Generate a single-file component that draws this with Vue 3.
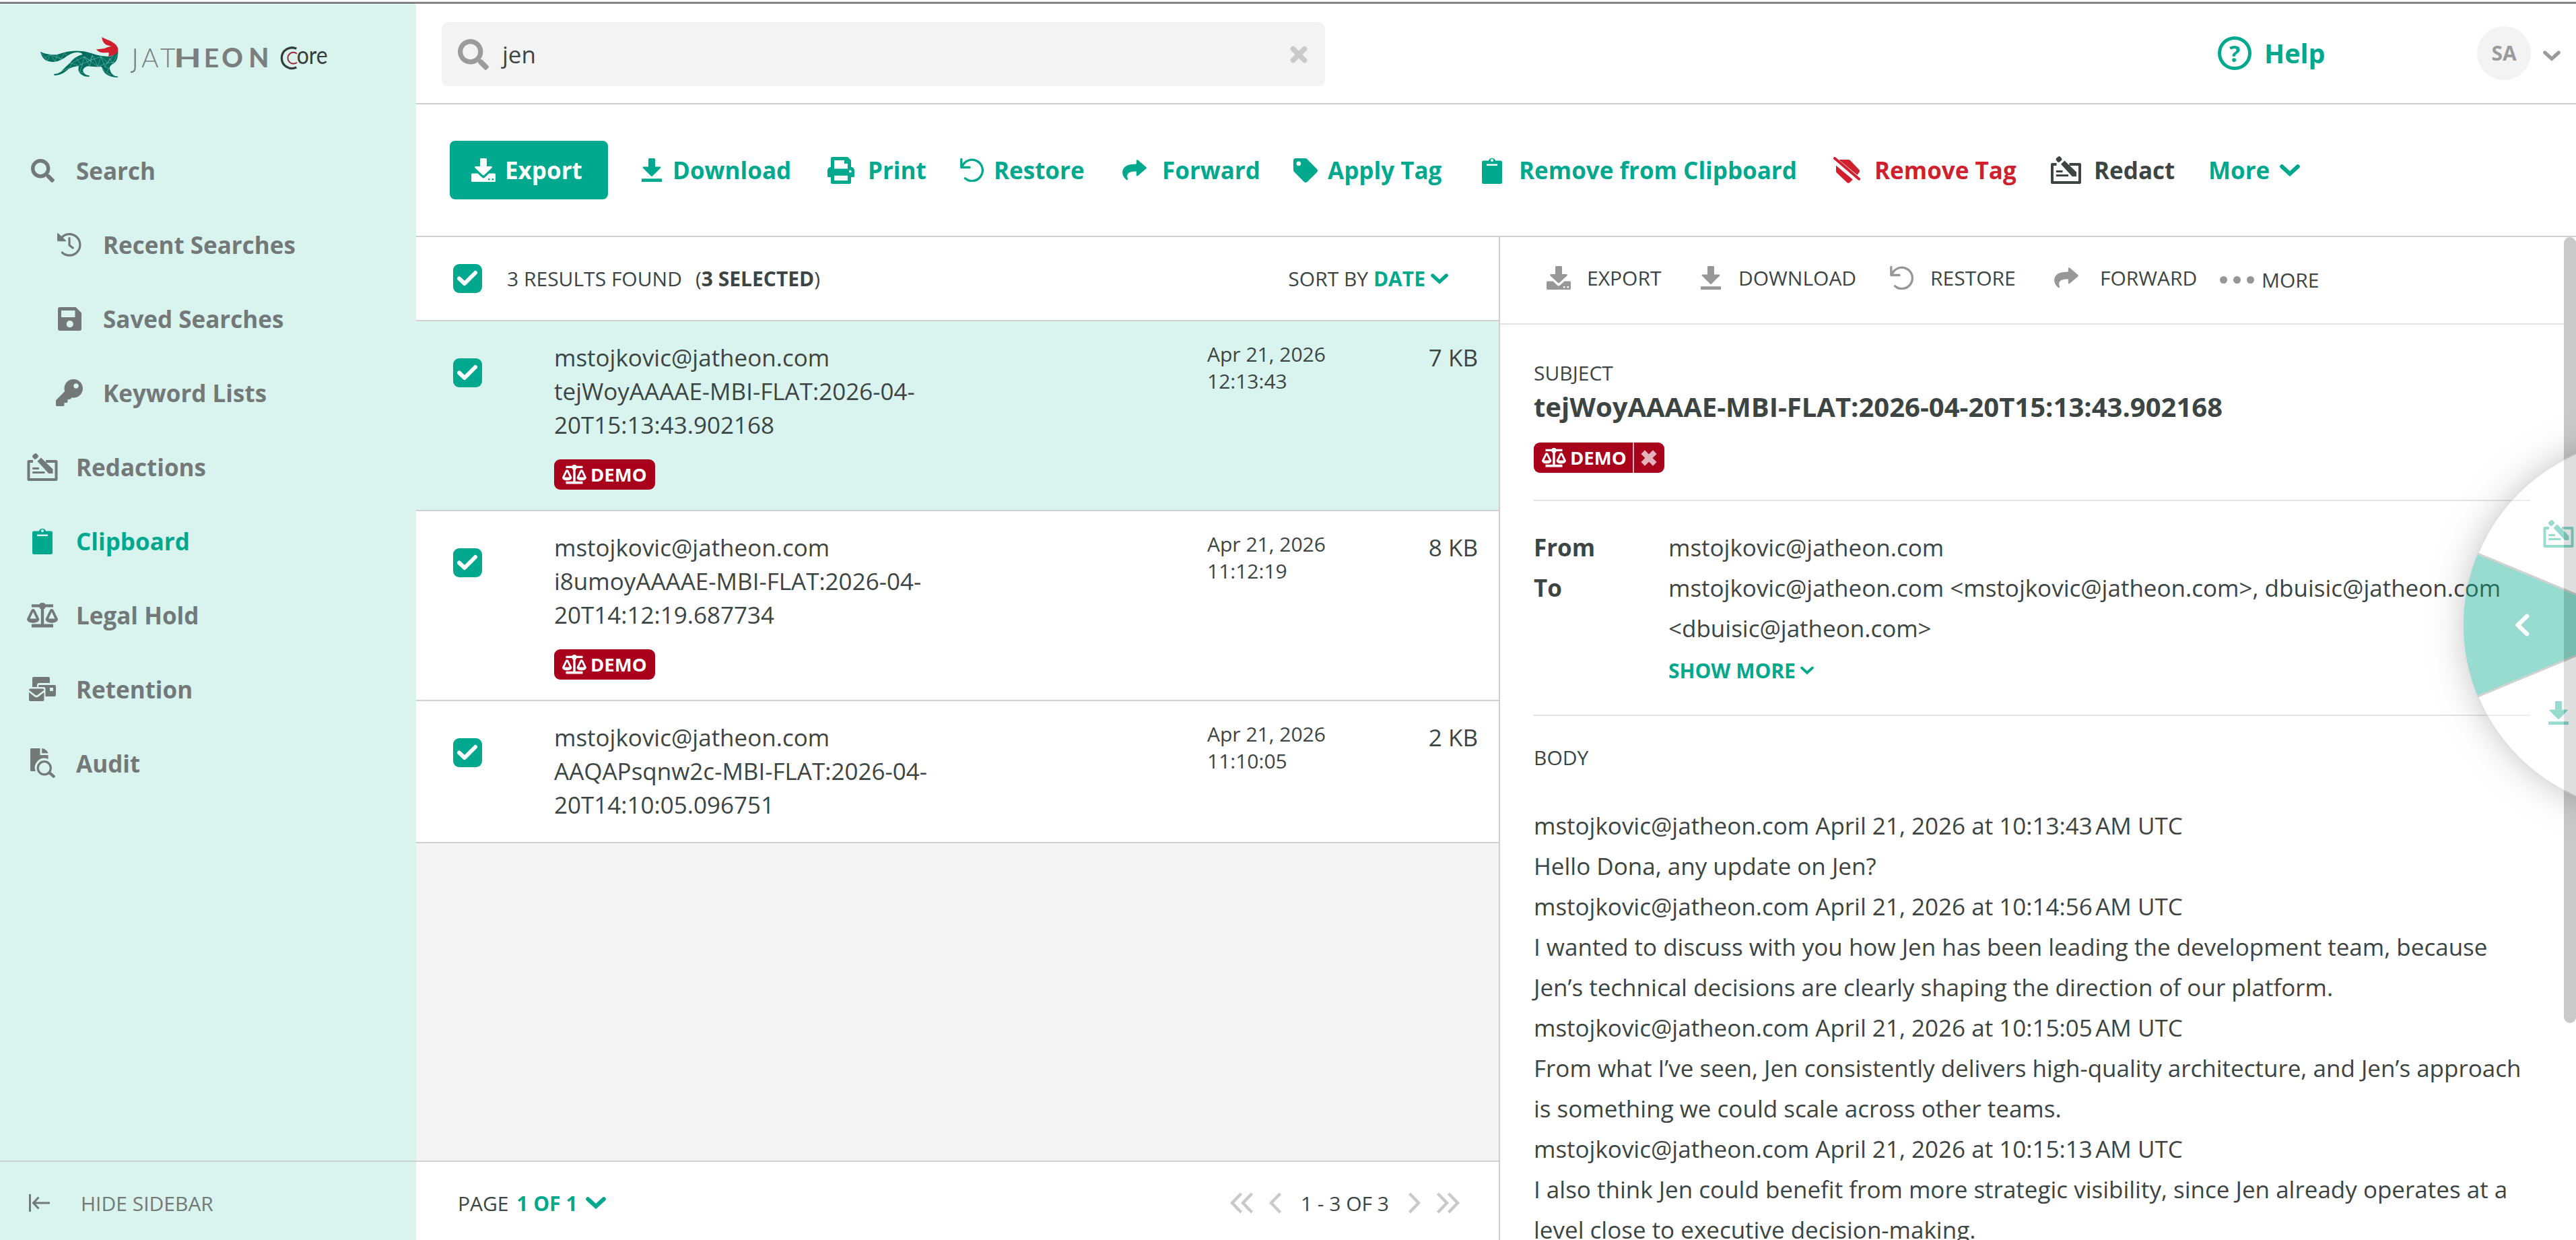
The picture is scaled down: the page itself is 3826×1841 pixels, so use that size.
<template>
  <!-- Shared icon shapes -->
  <svg class="sprite" width="0" height="0">
    <symbol id="i-search" viewBox="0 0 512 512">
      <path fill="currentColor" d="M505 442.7L405.3 343c-4.5-4.5-10.6-7-17-7H372c27.6-35.3 44-79.7 44-128C416 93.1 322.9 0 208 0S0 93.1 0 208s93.1 208 208 208c48.3 0 92.7-16.4 128-44v16.3c0 6.4 2.5 12.5 7 17l99.7 99.7c9.4 9.4 24.6 9.4 33.9 0l28.3-28.3c9.4-9.4 9.4-24.6.1-34zM208 336c-70.7 0-128-57.2-128-128 0-70.7 57.2-128 128-128 70.7 0 128 57.2 128 128 0 70.7-57.2 128-128 128z" />
    </symbol>
    <symbol id="i-history" viewBox="0 0 36 36">
      <path fill="currentColor" d="M0 2.4C0 1.2 1 1 1.8 1.8L13 12v1.2H1.2A1.2 1.2 0 0 1 0 12z" />
      <path fill="none" stroke="currentColor" stroke-width="3.2" stroke-linecap="round" stroke-linejoin="round" d="M6.5 7.6A15.8 15.8 0 1 1 7.4 30M18 8.5V19l5.2 4" />
    </symbol>
    <symbol id="i-save" viewBox="0 0 35 35">
      <path fill="currentColor" fill-rule="evenodd" d="M3 0H26.5L35 8.5V32a3 3 0 0 1-3 3H3a3 3 0 0 1-3-3V3a3 3 0 0 1 3-3zM5 5V15H25.5V5zM17.8 20a5.1 5.1 0 1 0 0 10.2a5.1 5.1 0 1 0 0-10.2z" />
    </symbol>
    <symbol id="i-key" viewBox="0 0 512 512">
      <path fill="currentColor" d="M512 176.001C512 273.203 433.202 352 336 352c-11.22 0-22.19-1.062-32.827-3.069l-24.012 27.014A23.999 23.999 0 0 1 261.223 384H224v40c0 13.255-10.745 24-24 24h-40v40c0 13.255-10.745 24-24 24H24c-13.255 0-24-10.745-24-24v-78.059c0-6.365 2.529-12.47 7.029-16.971l161.802-161.802C163.108 213.814 160 195.271 160 176 160 78.798 238.797.001 335.999 0 433.488-.001 512 78.511 512 176.001zM336 128c0 26.51 21.49 48 48 48s48-21.49 48-48-21.49-48-48-48-48 21.49-48 48z" />
    </symbol>
    <symbol id="i-redact" viewBox="0 0 45 41">
      <path fill="none" stroke="currentColor" stroke-width="4" stroke-linejoin="round" d="M8.5 12H2V39H43V12H27.5" />
      <path fill="none" stroke="currentColor" stroke-width="3.2" d="M7.8 22.5H17.5M7.8 28.5H26" />
      <path fill="currentColor" d="M15 11.8L20.4 6.4L38 23.5V30H31.8Z" />
      <rect x="8" y=".8" width="8" height="7.4" rx="2.6" fill="currentColor" transform="rotate(-40 12 4.5)" />
    </symbol>
    <symbol id="i-clipboard" viewBox="0 0 30 40">
      <path fill="currentColor" fill-rule="evenodd" d="M2.5 5.5H10a5.2 5.2 0 0 1 10 0h7.5A2.5 2.5 0 0 1 30 8v29.5a2.5 2.5 0 0 1-2.5 2.5h-25A2.5 2.5 0 0 1 0 37.5V8a2.5 2.5 0 0 1 2.5-2.5zM15 3a2.1 2.1 0 1 0 0 4.2a2.1 2.1 0 1 0 0-4.2zM7 10.5h16v2.4H7z" />
    </symbol>
    <symbol id="i-scales" viewBox="0 0 46 37">
      <path fill="currentColor" d="M7 2.2H18.5A5.3 5.3 0 0 1 27.5 2.2H39V6.4H27.6A5.5 5.5 0 0 1 25.2 9.6V31.6H39V36.4H7V31.6H20.8V9.6A5.5 5.5 0 0 1 18.4 6.4H7z" />
      <path fill="currentColor" fill-rule="evenodd" d="M6.6 10.6a3 3 0 0 1 5.2 0L18.2 23.5c1 3.4-3.6 6.2-9 6.2S-.8 26.9.2 23.5zM9.2 13.5L4.5 23.5H13.9zM34.2 10.6a3 3 0 0 1 5.2 0L45.8 23.5c1 3.4-3.6 6.2-9 6.2S26.8 26.9 27.8 23.5zM36.8 13.5L32.1 23.5H41.5z" />
    </symbol>
    <symbol id="i-mailbulk" viewBox="0 0 40 36">
      <path fill="currentColor" fill-rule="evenodd" d="M5 2a2 2 0 0 1 2-2H29a2 2 0 0 1 2 2V9H15.5a3.5 3.5 0 0 0-3.5 3.5V15H5zM14 15V13.8a1.8 1.8 0 0 1 1.8-1.8H38a2 2 0 0 1 2 2V27a2 2 0 0 1-2 2H24.5V18a3 3 0 0 0-3-3zM31 16v5h5v-5zM2 17.5H20.5a2 2 0 0 1 2 2L13 26.8a2.8 2.8 0 0 1-3.6 0L0 19.5a2 2 0 0 1 2-2zM0 22.8L8.6 29.4a4.5 4.5 0 0 0 5.3 0L22.5 22.8V34a2 2 0 0 1-2 2H2a2 2 0 0 1-2-2z" />
    </symbol>
    <symbol id="i-audit" viewBox="0 0 37 44">
      <path fill="currentColor" d="M1.5 0H14.5V10H26.5V16A14 14 0 0 0 7.8 34H1.5A1.5 1.5 0 0 1 0 32.5V1.5A1.5 1.5 0 0 1 1.5 0zM17.2 0C21 0 26 4 26.5 7.2H17.2z" />
      <circle cx="20.8" cy="29.3" r="9.6" fill="none" stroke="currentColor" stroke-width="3.2" />
      <path fill="none" stroke="currentColor" stroke-width="4.2" d="M27.5 36L30.5 38L36 43" />
    </symbol>
    <symbol id="i-hide" viewBox="0 0 31 26">
      <path fill="none" stroke="currentColor" stroke-width="3" d="M1.5 0V26M6 13H31M14.5 4.5L6.5 13L14.5 21.5" />
    </symbol>
    <symbol id="i-export" viewBox="0 0 36 35">
      <path fill="currentColor" fill-rule="evenodd" d="M14.5 0h7A1.5 1.5 0 0 1 23 1.5V12h6.5c1.3 0 1.8 1.3 1 2.2L19 25c-.6.6-1.4.6-2 0L5.500 14.2c-.8-.9-.3-2.2 1-2.2H13V1.5A1.5 1.5 0 0 1 14.5 0zM1.500 22.5H9.5L16 28.6a3 3 0 0 0 4 0L26.500 22.5H34.5A1.5 1.5 0 0 1 36 24V33.5A1.5 1.5 0 0 1 34.5 35H1.5A1.5 1.5 0 0 1 0 33.5V24A1.5 1.5 0 0 1 1.5 22.5zM25 30V32.5H27.5V30zM30.5 30V32.5H33V30z" />
    </symbol>
    <symbol id="i-download" viewBox="0 0 30 35">
      <path fill="currentColor" d="M11.5 0h7A1.5 1.5 0 0 1 20 1.5V12.5h7c1.3 0 1.8 1.2 1 2L16 26.6c-.6.6-1.4.6-2 0L2 14.5c-.8-.8-.3-2 1-2h7V1.5A1.5 1.5 0 0 1 11.5 0zM0 30.3h30V35H0z" />
    </symbol>
    <symbol id="i-print" viewBox="0 0 40 40">
      <path fill="currentColor" fill-rule="evenodd" d="M7.5 0H30L35 5V15A5 5 0 0 1 40 20V28.5A1.5 1.5 0 0 1 38.5 30H35V37.5A2.5 2.5 0 0 1 32.5 40H7.5A2.5 2.5 0 0 1 5 37.5V30H1.5A1.5 1.5 0 0 1 0 28.5V20A5 5 0 0 1 5 15V2.5A2.5 2.5 0 0 1 7.5 0zM10 5V17.5H30V10H25V5zM10 27.8V35H30V27.8zM33.8 19.5a1.9 1.9 0 1 0 0 3.8a1.9 1.9 0 1 0 0-3.8z" />
    </symbol>
    <symbol id="i-restore" viewBox="0 0 35 35">
      <path fill="none" stroke="currentColor" stroke-width="3.3" stroke-linecap="round" stroke-linejoin="round" d="M1.8 1.500V13.500H14M3 12.300A15.700 15.700 0 1 1 7.400 29.800" />
    </symbol>
    <symbol id="i-forward" viewBox="0 0 36 31">
      <path fill="currentColor" d="M20.8 1.6Q21.2 -.6 23 .6L35.2 11Q36.4 12.2 35.2 13.4L23 24Q21.2 25.2 20.8 23V17.6C11 17.800 5 19.500 8 28.800Q8 31 6 30C-.5 24.500-1 18 1.500 13.800C4.500 8 12 6.800 20.800 6.600z" />
    </symbol>
    <symbol id="i-tag" viewBox="0 0 512 512">
      <path fill="currentColor" d="M0 252.118V48C0 21.49 21.49 0 48 0h204.118a48 48 0 0 1 33.941 14.059l211.882 211.882c18.745 18.745 18.745 49.137 0 67.882L293.823 497.941c-18.745 18.745-49.137 18.745-67.882 0L14.059 286.059A48 48 0 0 1 0 252.118zM112 64c-26.51 0-48 21.49-48 48s21.49 48 48 48 48-21.49 48-48-21.49-48-48-48z" />
    </symbol>
    <symbol id="i-untag" viewBox="0 0 40 39">
      <path fill="currentColor" d="M8 4H22Q24 4 25.2 5.2L38.3 19Q40 21 38.3 23L35.500 26.800ZM4 12.800L28.800 33.500L24 38.200Q22 39.600 20.300 38L5 23.500Q4 22.500 4 21Z" />
      <path stroke="currentColor" stroke-width="4" stroke-linecap="round" d="M2 2L38 32.700" />
    </symbol>
    <symbol id="i-down" viewBox="0 0 30 18">
      <path fill="none" stroke="currentColor" stroke-width="6" stroke-linecap="round" d="M3.200 3.200L15 14L26.800 3.200" />
    </symbol>
    <symbol id="i-close" viewBox="0 0 26 26">
      <path stroke="currentColor" stroke-width="7.500" stroke-linecap="round" d="M4.500 4.500L21.500 21.500M21.500 4.500L4.500 21.500" />
    </symbol>
    <symbol id="i-times" viewBox="0 0 24 24">
      <path stroke="currentColor" stroke-width="8" stroke-linecap="square" d="M6 6L18 18M18 6L6 18" />
    </symbol>
    <symbol id="i-check" viewBox="0 0 43 43">
      <path fill="none" stroke="currentColor" stroke-width="6" stroke-linecap="round" stroke-linejoin="round" d="M9 21.500L17 29L33 13" />
    </symbol>
    <symbol id="i-prev" viewBox="0 0 20 32">
      <path fill="none" stroke="currentColor" stroke-width="4.500" d="M17.500 2L4 16L17.500 30" />
    </symbol>
    <symbol id="i-next" viewBox="0 0 20 32">
      <path fill="none" stroke="currentColor" stroke-width="4.500" d="M2.500 2L16 16L2.500 30" />
    </symbol>
  </svg>

  <div class="archive">
    <div class="window-edge"></div>

    <div class="shell">
      <aside class="sidebar">
        <svg class="logo" viewBox="0 0 1350 270">
          <path fill="#006f60" d="M30 110C50 122 75 122 100 124C130 118 150 105 200 107C250 108 265 125 310 130L335 132C355 128 370 118 376 104C377 130 372 150 360 160C345 170 340 172 338 185C345 210 355 218 376 221L374 225C345 224 320 215 310 195C305 187 308 182 300 176C280 180 255 176 240 175C225 180 215 190 222 202C228 212 238 216 249 217L247 222C225 222 205 212 200 195C198 185 202 178 200 174C180 176 165 180 150 192C135 205 118 216 92 216L90 210C105 209 115 206 125 196C135 185 150 172 162 160C172 148 185 132 215 124C222 120 210 112 190 113C165 115 150 130 130 142C110 155 90 158 70 154C50 150 36 135 30 110Z" />
          <path fill="none" stroke="#8fc9bd" stroke-width="1.600" d="M36 118L62 150L74 122L96 154L104 124L122 144L136 118L150 126M50 138L74 122L122 144M190 140L215 172L225 132L250 174L262 126L286 176L300 132L318 178L340 140L352 162L374 122M175 158L225 132L250 150L300 132L330 160L352 130M162 160L200 172L250 150L286 176L330 160L360 158M215 172L205 200L222 206M318 178L335 184L325 205L345 214M300 176L318 200M120 200L160 182L172 158M262 126L250 150L225 132" />
          <path fill="#d0202e" d="M304 45C325 58 350 62 365 78C378 92 378 105 374 112C365 125 350 128 332 132C335 125 337 118 333 113C315 117 290 116 279 100C295 98 312 98 325 92C330 88 340 88 345 86L330 82C312 76 305 62 304 45Z" />
          <g class="logo-name">
            <path class="logo-stem" d="M452 97V180Q452 202 432 201" />
            <text class="thin" x="480 564" y="180">AT</text>
            <text class="mid" x="625" y="180" textLength="122" lengthAdjust="spacingAndGlyphs">H</text>
            <text class="mid" x="758" y="180">E</text>
            <text class="heavy" x="838 958" y="180">ON</text>
          </g>
          <path class="core-outer" d="M1171 97A46 46 0 1 0 1171 180" />
          <path class="core-inner" d="M1173 119A25 25 0 1 0 1173 158" />
          <text class="core-name" x="1172" y="164" textLength="138" lengthAdjust="spacingAndGlyphs">ore</text>
        </svg>

        <nav class="nav">
          <a
            v-for="item in navItems"
            :key="item.label"
            class="nav-item"
            :class="{ sub: item.sub, active: item.active }"
          >
            <span class="nav-icon">
              <svg :style="{ width: item.w + 'px', height: item.h + 'px' }"><use :href="'#i-' + item.icon" /></svg>
            </span>
            {{ item.label }}
          </a>
        </nav>

        <div class="hide-sidebar">
          <svg class="hide-icon"><use href="#i-hide" /></svg>
          HIDE SIDEBAR
        </div>
      </aside>

      <main class="main">
        <header class="header">
          <div class="search-box">
            <svg class="search-icon"><use href="#i-search" /></svg>
            <span class="search-text">{{ query }}</span>
            <svg class="clear-icon"><use href="#i-close" /></svg>
          </div>
          <div class="help">
            <span class="help-mark">?</span>
            Help
          </div>
          <div class="account">
            <span class="avatar">SA</span>
            <svg class="account-arrow"><use href="#i-down" /></svg>
          </div>
        </header>

        <div class="toolbar">
          <button class="btn-export">
            <svg class="export-icon"><use href="#i-export" /></svg>
            Export
          </button>
          <div
            v-for="action in actions"
            :key="action.label"
            class="action"
            :class="action.tone"
            :style="{ width: action.width + 'px' }"
          >
            <span class="action-icon" :style="{ width: action.slot + 'px' }">
              <svg :style="{ width: action.w + 'px', height: action.h + 'px' }"><use :href="'#i-' + action.icon" /></svg>
            </span>
            {{ action.label }}
          </div>
          <div class="action more">
            More
            <svg class="more-arrow"><use href="#i-down" /></svg>
          </div>
        </div>

        <div class="content">
          <section class="results">
            <div class="results-header">
              <span class="checkbox"><svg><use href="#i-check" /></svg></span>
              <span class="found">3 RESULTS FOUND</span>
              <span class="selected">(<b>3 SELECTED</b>)</span>
              <span class="sort">SORT BY <b>DATE</b></span>
              <svg class="sort-arrow"><use href="#i-down" /></svg>
            </div>

            <div
              v-for="mail in mails"
              :key="mail.time"
              class="row"
              :class="{ current: mail.current }"
            >
              <span class="checkbox"><svg><use href="#i-check" /></svg></span>
              <div class="row-text">
                <div>{{ mail.from }}</div>
                <div v-for="line in mail.subject" :key="line">{{ line }}</div>
                <span v-if="mail.tag" class="tag">
                  <svg class="tag-icon"><use href="#i-scales" /></svg>{{ mail.tag }}
                </span>
              </div>
              <div class="row-date">{{ mail.date }}<br>{{ mail.time }}</div>
              <div class="row-size">{{ mail.size }}</div>
            </div>

            <div class="results-empty"></div>

            <div class="pager">
              <span>PAGE <b>1 OF 1</b></span>
              <svg class="page-arrow"><use href="#i-down" /></svg>
              <div class="pager-nav">
                <span class="double"><svg><use href="#i-prev" /></svg><svg><use href="#i-prev" /></svg></span>
                <svg class="single"><use href="#i-prev" /></svg>
                <span class="range">1 - 3 OF 3</span>
                <svg class="single"><use href="#i-next" /></svg>
                <span class="double"><svg><use href="#i-next" /></svg><svg><use href="#i-next" /></svg></span>
              </div>
            </div>
          </section>

          <section class="preview">
            <div class="preview-toolbar">
              <div
                v-for="action in previewActions"
                :key="action.label"
                class="preview-action"
                :style="{ width: action.width + 'px' }"
              >
                <span class="action-icon" :style="{ width: action.slot + 'px' }">
                  <svg :style="{ width: action.w + 'px', height: action.h + 'px' }"><use :href="'#i-' + action.icon" /></svg>
                </span>
                {{ action.label }}
              </div>
              <div class="preview-more">
                <i></i><i></i><i></i>
                <span>MORE</span>
              </div>
            </div>

            <div class="message">
              <div class="section-label">SUBJECT</div>
              <h1 class="subject">tejWoyAAAAE-MBI-FLAT:2026-04-20T15:13:43.902168</h1>
              <span class="tag removable">
                <svg class="tag-icon"><use href="#i-scales" /></svg>DEMO
                <span class="tag-remove"><svg><use href="#i-times" /></svg></span>
              </span>

              <div class="people">
                <div class="person">
                  <b>From</b>
                  <span>mstojkovic@jatheon.com</span>
                </div>
                <div class="person">
                  <b>To</b>
                  <span>mstojkovic@jatheon.com &lt;mstojkovic@jatheon.com&gt;, dbuisic@jatheon.com &lt;dbuisic@jatheon.com&gt;</span>
                </div>
                <div class="show-more">
                  SHOW MORE
                  <svg><use href="#i-down" /></svg>
                </div>
              </div>

              <div class="section-label body-label">BODY</div>
              <div class="body-text">
                <div v-for="(line, i) in bodyLines" :key="i">{{ line }}</div>
              </div>
            </div>
          </section>
        </div>
      </main>
    </div>

    <div class="scroll-thumb"></div>

    <!-- Quick action wheel, half off the right edge -->
    <div class="wheel">
      <div class="wheel-disc"></div>
      <svg class="wheel-slices" viewBox="0 0 560 560">
        <circle cx="280" cy="280" r="277" fill="#fff" stroke="#b4b4b4" stroke-width="2" />
        <path fill="#00a88e" d="M280 280L24.1 174A277 277 0 0 0 24.1 386Z" />
        <path fill="none" stroke="#8d9391" stroke-width="3" d="M24.1 174L280 280L24.1 386" />
        <path fill="none" stroke="#fff" stroke-width="6.5" stroke-linecap="round" stroke-linejoin="round" d="M97 267L83.5 280L97 293" />
      </svg>
      <svg class="wheel-redact"><use href="#i-redact" /></svg>
      <svg class="wheel-download"><use href="#i-download" /></svg>
    </div>
  </div>
</template>

<script setup>
import { ref } from 'vue'

const query = ref('jen')

const navItems = [
  { label: 'Search', icon: 'search', w: 35, h: 35 },
  { label: 'Recent Searches', icon: 'history', w: 36, h: 36, sub: true },
  { label: 'Saved Searches', icon: 'save', w: 35, h: 35, sub: true },
  { label: 'Keyword Lists', icon: 'key', w: 40, h: 40, sub: true },
  { label: 'Redactions', icon: 'redact', w: 46, h: 41 },
  { label: 'Clipboard', icon: 'clipboard', w: 30, h: 40, active: true },
  { label: 'Legal Hold', icon: 'scales', w: 46, h: 37 },
  { label: 'Retention', icon: 'mailbulk', w: 40, h: 36 },
  { label: 'Audit', icon: 'audit', w: 37, h: 44 }
]

// slot is the icon column, width is the whole button
const actions = [
  { label: 'Download', icon: 'download', w: 30, h: 35, slot: 46, width: 276 },
  { label: 'Print', icon: 'print', w: 40, h: 40, slot: 60, width: 197 },
  { label: 'Restore', icon: 'restore', w: 35, h: 35, slot: 50, width: 241 },
  { label: 'Forward', icon: 'forward', w: 36, h: 31, slot: 59, width: 254 },
  { label: 'Apply Tag', icon: 'tag', w: 36, h: 36, slot: 51, width: 280 },
  { label: 'Remove from Clipboard', icon: 'clipboard', w: 30, h: 40, slot: 55, width: 522 },
  { label: 'Remove Tag', icon: 'untag', w: 40, h: 39, slot: 61, width: 323, tone: 'danger' },
  { label: 'Redact', icon: 'redact', w: 45, h: 41, slot: 64, width: 234, tone: 'dark' }
]

const previewActions = [
  { label: 'EXPORT', icon: 'export', w: 36, h: 35, slot: 60, width: 229 },
  { label: 'DOWNLOAD', icon: 'download', w: 30, h: 35, slot: 56, width: 281 },
  { label: 'RESTORE', icon: 'restore', w: 35, h: 35, slot: 60, width: 244 },
  { label: 'FORWARD', icon: 'forward', w: 36, h: 31, slot: 68, width: 246 }
]

const mails = ref([
  {
    from: 'mstojkovic@jatheon.com',
    subject: ['tejWoyAAAAE-MBI-FLAT:2026-04-', '20T15:13:43.902168'],
    tag: 'DEMO',
    date: 'Apr 21, 2026',
    time: '12:13:43',
    size: '7 KB',
    current: true
  },
  {
    from: 'mstojkovic@jatheon.com',
    subject: ['i8umoyAAAAE-MBI-FLAT:2026-04-', '20T14:12:19.687734'],
    tag: 'DEMO',
    date: 'Apr 21, 2026',
    time: '11:12:19',
    size: '8 KB'
  },
  {
    from: 'mstojkovic@jatheon.com',
    subject: ['AAQAPsqnw2c-MBI-FLAT:2026-04-', '20T14:10:05.096751'],
    date: 'Apr 21, 2026',
    time: '11:10:05',
    size: '2 KB'
  }
])

const bodyLines = [
  'mstojkovic@jatheon.com April 21, 2026 at 10:13:43\u202fAM UTC',
  'Hello Dona, any update on Jen?',
  'mstojkovic@jatheon.com April 21, 2026 at 10:14:56\u202fAM UTC',
  'I wanted to discuss with you how Jen has been leading the development team, because Jen’s technical decisions are clearly shaping the direction of our platform.',
  'mstojkovic@jatheon.com April 21, 2026 at 10:15:05\u202fAM UTC',
  'From what I’ve seen, Jen consistently delivers high-quality architecture, and Jen’s approach is something we could scale across other teams.',
  'mstojkovic@jatheon.com April 21, 2026 at 10:15:13\u202fAM UTC',
  'I also think Jen could benefit from more strategic visibility, since Jen already operates at a level close to executive decision-making.'
]
</script>

<style>
body {
  margin: 0;
  overflow: hidden;
}
</style>

<style scoped>
.sprite {
  position: absolute;
}

.archive {
  position: relative;
  display: flex;
  flex-direction: column;
  width: 3826px;
  height: 1841px;
  overflow: hidden;
  background: #fff;
  color: #3c4543;
  font-family: "Open Sans", sans-serif;
  font-size: 35px;
}

.archive svg {
  display: block;
  flex-shrink: 0;
}

.window-edge {
  flex: 0 0 2px;
  border-top: 2px solid #fff;
  border-bottom: 1px solid #000;
  background: #c8c8c8;
}

.shell {
  display: flex;
  flex: 1;
  min-height: 0;
}

/* Sidebar */
.sidebar {
  display: flex;
  flex-direction: column;
  width: 618px;
  flex-shrink: 0;
  background: #d9f3ee;
  color: #737978;
}

.logo {
  width: 450px;
  height: 90px;
  margin: 35px 0 0 50px;
}

.logo-name {
  fill: #7a7f7e;
  font-family: Lato, sans-serif;
  font-size: 117px;
}

.logo-stem {
  fill: none;
  stroke: #7a7f7e;
  stroke-width: 7px;
}

.thin {
  font-weight: 300;
}

.mid {
  font-weight: 700;
}

.heavy {
  font-weight: 900;
}

.core-outer {
  fill: none;
  stroke: #363e3c;
  stroke-width: 10px;
}

.core-inner {
  fill: none;
  stroke: #a3263a;
  stroke-width: 6px;
}

.core-name {
  fill: #363e3c;
  font-family: Lato, sans-serif;
  font-size: 108px;
}

.nav {
  flex: 1;
  padding-top: 68px;
}

.nav-item {
  display: flex;
  align-items: center;
  height: 110px;
  padding-left: 38px;
  font-weight: 700;
}

.nav-item.sub {
  padding-left: 78px;
}

.nav-item.active {
  color: #00a88e;
}

.nav-icon {
  display: flex;
  justify-content: center;
  width: 50px;
  margin-right: 25px;
}

.hide-sidebar {
  display: flex;
  align-items: center;
  height: 118px;
  padding: 6px 0 0 43px;
  box-sizing: border-box;
  border-top: 2px solid #c8d0ce;
  font-size: 30px;
}

.hide-icon {
  width: 31px;
  height: 26px;
  margin-right: 46px;
}

/* Header */
.main {
  display: flex;
  flex-direction: column;
  flex: 1;
  min-width: 0;
}

.header {
  display: flex;
  align-items: center;
  height: 148px;
  flex-shrink: 0;
  padding-left: 38px;
  border-bottom: 2px solid #cfcfcf;
}

.search-box {
  display: flex;
  align-items: center;
  width: 1312px;
  height: 95px;
  margin-top: 3px;
  padding: 0 26px 0 24px;
  box-sizing: border-box;
  border-radius: 10px;
  background: #f3f3f3;
}

.search-icon {
  width: 46px;
  height: 46px;
  color: #9b9b9b;
}

.search-text {
  flex: 1;
  margin-left: 20px;
}

.clear-icon {
  width: 26px;
  height: 26px;
  color: #cacaca;
}

.help {
  display: flex;
  align-items: center;
  margin-left: 1326px;
  width: 385px;
  color: #00a88e;
  font-size: 39.5px;
  font-weight: 700;
}

.help-mark {
  display: flex;
  align-items: center;
  justify-content: center;
  width: 50px;
  height: 50px;
  margin-right: 19px;
  border: 5px solid #00a88e;
  border-radius: 50%;
  box-sizing: border-box;
  font-size: 34px;
  line-height: 1;
}

.account {
  display: flex;
  align-items: center;
  gap: 18px;
}

.avatar {
  width: 80px;
  height: 80px;
  border-radius: 50%;
  background: #f3f3f3;
  color: #9b9b9b;
  font-size: 30px;
  font-weight: 700;
  line-height: 80px;
  text-align: center;
}

.account-arrow {
  width: 26px;
  height: 16px;
  margin-top: 8px;
  color: #9b9b9b;
}

/* Toolbar */
.toolbar {
  display: flex;
  align-items: center;
  height: 195px;
  flex-shrink: 0;
  padding-left: 50px;
  border-bottom: 2px solid #cfcfcf;
  font-weight: 700;
}

.btn-export {
  display: flex;
  align-items: center;
  width: 235px;
  height: 87px;
  margin-right: 50px;
  padding: 0 0 0 32px;
  border: none;
  border-radius: 8px;
  background: #00a88e;
  color: #fff;
  font: inherit;
}

.export-icon {
  width: 36px;
  height: 35px;
  margin-right: 14px;
}

.action {
  display: flex;
  align-items: center;
  color: #00a88e;
  white-space: nowrap;
}

.action.danger {
  color: #d0202e;
}

.action.dark {
  color: #3c4543;
}

.action-icon {
  flex-shrink: 0;
}

.more-arrow {
  width: 30px;
  height: 18px;
  margin-left: 15px;
}

/* Results list */
.content {
  display: flex;
  flex: 1;
  min-height: 0;
}

.results {
  display: flex;
  flex-direction: column;
  width: 1608px;
  flex-shrink: 0;
  border-right: 2px solid #cfcfcf;
}

.results-header {
  display: flex;
  align-items: center;
  height: 123px;
  padding: 0 75px 0 55px;
  border-bottom: 2px solid #cfcfcf;
  font-size: 30px;
}

.checkbox {
  flex-shrink: 0;
  width: 43px;
  height: 43px;
  border-radius: 9px;
  background: #00a88e;
  color: #fff;
}

.checkbox svg {
  width: 43px;
  height: 43px;
}

.found {
  margin-left: 37px;
}

.selected {
  margin-left: 20px;
}

.sort {
  margin-left: auto;
}

.sort b,
.pager b {
  color: #00a88e;
}

.sort-arrow {
  width: 26px;
  height: 16px;
  margin-left: 8px;
}

.sort-arrow,
.page-arrow {
  color: #00a88e;
}

.row {
  display: flex;
  padding: 29px 31px 30px 55px;
  border-bottom: 2px solid #cfcfcf;
  line-height: 50px;
}

.row.current {
  background: #d9f3ee;
}

.row .checkbox {
  margin-top: 26px;
}

.row-text {
  width: 970px;
  margin-left: 107px;
}

.row-date {
  font-size: 30px;
  line-height: 40px;
}

.row-size {
  margin-left: auto;
}

.tag {
  display: flex;
  align-items: center;
  width: 150px;
  height: 45px;
  margin-top: 26px;
  padding-left: 12px;
  box-sizing: border-box;
  border-radius: 9px;
  background: #a9001c;
  color: #fff;
  font-size: 27.5px;
  font-weight: 700;
  line-height: 45px;
}

.tag-icon {
  width: 36px;
  height: 29px;
  margin-right: 6px;
}

.results-empty {
  flex: 1;
  background: #f3f3f3;
}

.pager {
  display: flex;
  align-items: center;
  height: 118px;
  flex-shrink: 0;
  padding: 6px 57px 0 62px;
  box-sizing: border-box;
  border-top: 2px solid #cfcfcf;
  font-size: 30px;
}

.pager b {
  margin-left: 4px;
}

.page-arrow {
  width: 30px;
  height: 18px;
  margin-left: 12px;
}

.pager-nav {
  display: flex;
  align-items: center;
  margin-left: auto;
}

.pager-nav svg {
  width: 20px;
  height: 32px;
  color: #cacaca;
}

.double {
  display: flex;
}

.double svg + svg {
  margin-left: -4px;
}

.pager-nav .single {
  margin: 0 22px;
}

.range {
  margin: 0 6px;
}

/* Message preview */
.preview {
  flex: 1;
  min-width: 0;
  overflow: hidden;
}

.preview-toolbar {
  display: flex;
  align-items: center;
  height: 128px;
  padding-left: 69px;
  border-bottom: 2px solid #e3e3e3;
  font-size: 30px;
}

.preview-action {
  display: flex;
  align-items: center;
  padding-bottom: 7px;
}

.preview-action svg {
  color: #979797;
}

.preview-more {
  display: flex;
  align-items: center;
  padding-bottom: 1px;
}

.preview-more i {
  width: 11px;
  height: 11px;
  margin-right: 9px;
  border-radius: 50%;
  background: #979797;
}

.preview-more span {
  margin-left: 2px;
}

.message {
  width: 1480px;
  padding: 52px 0 0 50px;
}

.section-label {
  font-size: 30px;
  line-height: 40px;
}

.subject {
  margin: 5px 0 0;
  font-size: 40px;
  font-weight: 700;
  line-height: 50px;
}

.tag.removable {
  width: 194px;
  margin-top: 28px;
}

.tag-remove {
  display: flex;
  align-items: center;
  height: 45px;
  margin-left: 9px;
  padding-left: 10px;
  border-left: 2px solid #e5b3bb;
  color: #e5b3bb;
}

.tag-remove svg {
  width: 24px;
  height: 24px;
}

.people {
  margin-top: 40px;
  padding: 39px 0 33px;
  border-top: 2px solid #e3e3e3;
  border-bottom: 2px solid #e3e3e3;
  line-height: 60px;
}

.person {
  display: flex;
}

.person b {
  width: 200px;
  flex-shrink: 0;
}

.show-more {
  display: flex;
  align-items: center;
  height: 65px;
  margin-left: 200px;
  color: #00a88e;
  font-size: 30px;
  font-weight: 700;
}

.show-more svg {
  width: 20px;
  height: 13px;
  margin-left: 7px;
}

.body-label {
  margin-top: 42px;
}

.body-text {
  margin-top: 51px;
  line-height: 60px;
}

/* Overlays */
.scroll-thumb {
  position: absolute;
  top: 352px;
  right: 0;
  width: 18px;
  height: 1167px;
  border-radius: 9px;
  background: #c9c9c9;
}

.wheel {
  position: absolute;
  top: 648px;
  left: 3656px;
  width: 560px;
  height: 560px;
  opacity: 0.4;
  color: #00a88e;
}

.wheel-disc {
  position: absolute;
  inset: 4px;
  border-radius: 50%;
  box-shadow: 0 0 50px rgba(0, 0, 0, 0.6);
}

.wheel-slices {
  position: absolute;
  inset: 0;
}

.wheel-redact {
  position: absolute;
  top: 124px;
  left: 121px;
  width: 46px;
  height: 41px;
}

.wheel-download {
  position: absolute;
  top: 393px;
  left: 129px;
  width: 30px;
  height: 35px;
}
</style>
